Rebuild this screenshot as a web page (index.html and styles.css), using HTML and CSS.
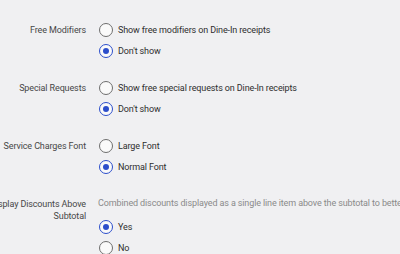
FILE: index.html
```html
<!DOCTYPE html>
<html lang="en">
<head>
  <meta charset="UTF-8" />
  <meta name="viewport" content="width=device-width, initial-scale=1.0" />
  <title>Receipt Settings</title>
  <link rel="stylesheet" href="styles.css">
</head>
<body>
  <div class="settings">
    <!-- Free modifiers -->
    <div class="setting">
      <div class="setting-label">Free Modifiers</div>
      <div class="setting-options">
        <label class="option"><input type="radio" name="freeModifiers" /> Show free modifiers on Dine-In receipts</label>
        <label class="option"><input type="radio" name="freeModifiers" checked /> Don't show</label>
      </div>
    </div>

    <!-- Special requests -->
    <div class="setting">
      <div class="setting-label">Special Requests</div>
      <div class="setting-options">
        <label class="option"><input type="radio" name="specialRequests" /> Show free special requests on Dine-In receipts</label>
        <label class="option"><input type="radio" name="specialRequests" checked /> Don't show</label>
      </div>
    </div>

    <!-- Service charges font -->
    <div class="setting">
      <div class="setting-label">Service Charges Font</div>
      <div class="setting-options">
        <label class="option"><input type="radio" name="serviceFont" /> Large Font</label>
        <label class="option"><input type="radio" name="serviceFont" checked /> Normal Font</label>
      </div>
    </div>

    <!-- Discounts above subtotal -->
    <div class="setting">
      <div class="setting-label">Display Discounts Above Subtotal</div>
      <div class="setting-options">
        <p class="description">Combined discounts displayed as a single line item above the subtotal to better show savings on receipts</p>
        <label class="option"><input type="radio" name="discounts" checked /> Yes</label>
        <label class="option"><input type="radio" name="discounts" /> No</label>
      </div>
    </div>
  </div>
</body>
</html>
```

FILE: styles.css
```css
body {
  font-family: Roboto, "Liberation Sans", sans-serif;
  font-size: 9px;
  letter-spacing: -0.12px;
  background: #f0f0f2;
  color: #2e2e2e;
  margin: 0;
  padding: 0;
  overflow: hidden;
}

.settings {
  margin-left: -14px;
  padding-top: 19px;
}

.setting {
  display: flex;
  gap: 12px;
  margin-bottom: 16px;
}

.setting-label {
  flex: 0 0 100px;
  text-align: right;
  color: #474747;
  line-height: 12px;
  padding-top: 4.5px;
}

.setting-options {
  flex: 1;
  min-width: 0;
}

.option {
  display: flex;
  align-items: center;
  height: 21px;
  white-space: nowrap;
}

.option input {
  appearance: none;
  width: 14px;
  height: 14px;
  margin: 0 5px 0 1px;
  border: 1.2px solid #6e6e6e;
  border-radius: 50%;
  background: #fafafa;
  display: grid;
  place-content: center;
}

.option input:checked {
  border: 1.6px solid #2c4ecb;
}

.option input:checked::before {
  content: "";
  width: 6px;
  height: 6px;
  border-radius: 50%;
  background: #2c4ecb;
}

.description {
  margin: 0 0 2px;
  line-height: 21px;
  color: #8a8a8a;
  white-space: nowrap;
}
```
